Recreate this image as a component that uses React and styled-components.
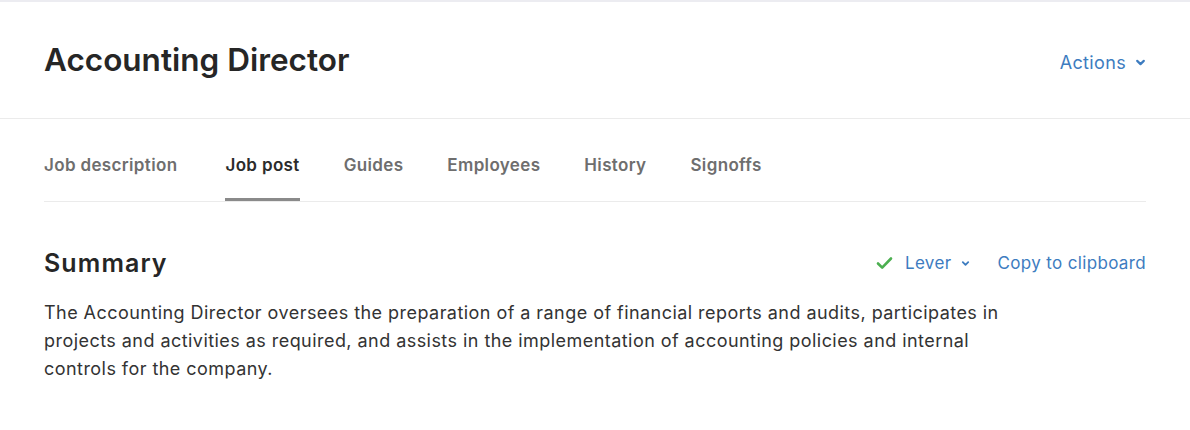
import React from "react";
import styled, { createGlobalStyle } from "styled-components";

const Global = createGlobalStyle`
  body {
    margin: 0;
    background: #fff;
    font-family: Inter, "Noto Sans", sans-serif;
    color: #262626;
  }
`;

const Page = styled.div`
  border-top: 2px solid #ececf1;
`;

const Header = styled.header`
  display: flex;
  align-items: center;
  justify-content: space-between;
  height: 117px;
  padding: 0 44px;
  border-bottom: 1px solid #ebebeb;
  box-sizing: border-box;
`;

const Title = styled.h1`
  margin: 0 0 2px;
  font-size: 31.5px;
  font-weight: 600;
  color: #262626;
`;

const LinkButton = styled.button`
  display: flex;
  align-items: center;
  gap: ${(p) => p.gap || 8}px;
  border: 0;
  background: none;
  padding: 0;
  font-family: inherit;
  font-size: ${(p) => p.size || 17}px;
  letter-spacing: 0.35px;
  color: #3d7cc0;
  cursor: pointer;
`;

const HeaderAction = styled(LinkButton)`
  margin-top: 4px;
`;

const Content = styled.div`
  padding: 0 44px;
`;

const Tabs = styled.nav`
  display: flex;
  gap: 44px;
  height: 83px;
  border-bottom: 1px solid #ebebeb;
  box-sizing: border-box;
`;

const Tab = styled.a`
  display: flex;
  align-items: center;
  padding-top: 12px;
  font-size: 17px;
  font-weight: 600;
  letter-spacing: 0.35px;
  color: ${(p) => (p.active ? "#2b2b2b" : "#6e6e6e")};
  border-bottom: 3px solid ${(p) => (p.active ? "#8a8a8a" : "transparent")};

  &:first-child {
    margin-right: 4px;
  }
`;

const SectionHead = styled.div`
  display: flex;
  align-items: center;
  justify-content: space-between;
  margin-top: 46px;
`;

const SectionTitle = styled.h2`
  margin: 0;
  font-size: 25px;
  font-weight: 600;
  letter-spacing: 1.1px;
  color: #262626;
`;

const Tools = styled.div`
  display: flex;
  align-items: center;
  gap: 27px;
`;

const Check = styled.span`
  display: flex;
  margin-right: 2px;
`;

const Text = styled.p`
  margin: 21px 0 0;
  max-width: 980px;
  font-size: 18px;
  line-height: 28px;
  letter-spacing: 0.45px;
  color: #333;
`;

const Chevron = ({ size = 10 }) => (
  <svg width={size} height={size} viewBox="0 0 10 10">
    <path d="M2 3.5l3 3 3-3" fill="none" stroke="currentColor" strokeWidth="2" strokeLinecap="round" strokeLinejoin="round" />
  </svg>
);

const tabs = ["Job description", "Job post", "Guides", "Employees", "History", "Signoffs"];

export default function App() {
  return (
    <Page>
      <Global />
      <Header>
        <Title>Accounting Director</Title>
        <HeaderAction size={18} gap={9}>
          Actions <Chevron size={11} />
        </HeaderAction>
      </Header>
      <Content>
        <Tabs>
          {tabs.map((t) => (
            <Tab key={t} active={t === "Job post"}>
              {t}
            </Tab>
          ))}
        </Tabs>
        <SectionHead>
          <SectionTitle>Summary</SectionTitle>
          <Tools>
            <LinkButton gap={10}>
              <Check>
                <svg width="17" height="14" viewBox="0 0 17 14">
                  <path d="M2 7.5l4.2 4.2L15 2.5" fill="none" stroke="#4caf50" strokeWidth="2.6" strokeLinecap="round" strokeLinejoin="round" />
                </svg>
              </Check>
              Lever <Chevron size={9} />
            </LinkButton>
            <LinkButton>Copy to clipboard</LinkButton>
          </Tools>
        </SectionHead>
        <Text>
          The Accounting Director oversees the preparation of a range of financial reports and audits, participates in
          projects and activities as required, and assists in the implementation of accounting policies and internal
          controls for the company.
        </Text>
      </Content>
    </Page>
  );
}
